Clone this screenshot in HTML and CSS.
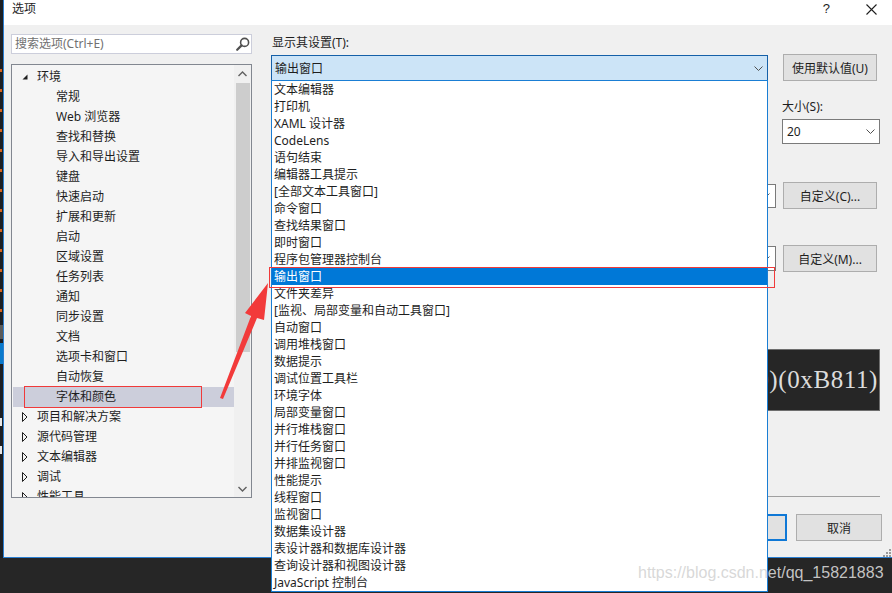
FILE: index.html
```html
<!DOCTYPE html>
<html lang="zh-CN">
<head>
<meta charset="utf-8">
<title>选项</title>
<link rel="stylesheet" href="styles.css">
</head>
<body>
<div class="screen">
  <div class="top">
    <div class="strip"></div>
    <div class="dialog">
      <div class="titlebar">
        <span class="title">选项</span>
        <span class="help">?</span>
        <svg class="close" width="11" height="11" viewBox="0 0 11 11"><path d="M0.5 0.5L10.5 10.5M10.5 0.5L0.5 10.5" stroke="#1e1e1e" stroke-width="1.1" fill="none"/></svg>
      </div>
      <div class="body">
        <div class="left">
          <div class="search">
            <span class="ph">搜索选项(Ctrl+E)</span>
            <svg class="mag" width="14" height="14" viewBox="0 0 14 14"><circle cx="8.6" cy="5.4" r="4" stroke="#505050" stroke-width="1.6" fill="none"/><path d="M5.6 8.4L1.2 12.8" stroke="#505050" stroke-width="2.2" stroke-linecap="round"/></svg>
          </div>
          <div class="tree">
            <div class="rows">
              <div class="row l0"><span class="tw"><svg width="6" height="6" viewBox="0 0 6 6"><polygon points="5.5,0.5 5.5,5.5 0.5,5.5" fill="#1e1e1e"/></svg></span><span>环境</span></div>
              <div class="row l1">常规</div>
              <div class="row l1">Web 浏览器</div>
              <div class="row l1">查找和替换</div>
              <div class="row l1">导入和导出设置</div>
              <div class="row l1">键盘</div>
              <div class="row l1">快速启动</div>
              <div class="row l1">扩展和更新</div>
              <div class="row l1">启动</div>
              <div class="row l1">区域设置</div>
              <div class="row l1">任务列表</div>
              <div class="row l1">通知</div>
              <div class="row l1">同步设置</div>
              <div class="row l1">文档</div>
              <div class="row l1">选项卡和窗口</div>
              <div class="row l1">自动恢复</div>
              <div class="row l1 sel">字体和颜色</div>
              <div class="row l0"><span class="tw"><svg width="6" height="10" viewBox="0 0 6 10"><polygon points="0.5,0.5 5,5 0.5,9.5" fill="none" stroke="#1e1e1e" stroke-width="1"/></svg></span><span>项目和解决方案</span></div>
              <div class="row l0"><span class="tw"><svg width="6" height="10" viewBox="0 0 6 10"><polygon points="0.5,0.5 5,5 0.5,9.5" fill="none" stroke="#1e1e1e" stroke-width="1"/></svg></span><span>源代码管理</span></div>
              <div class="row l0"><span class="tw"><svg width="6" height="10" viewBox="0 0 6 10"><polygon points="0.5,0.5 5,5 0.5,9.5" fill="none" stroke="#1e1e1e" stroke-width="1"/></svg></span><span>文本编辑器</span></div>
              <div class="row l0"><span class="tw"><svg width="6" height="10" viewBox="0 0 6 10"><polygon points="0.5,0.5 5,5 0.5,9.5" fill="none" stroke="#1e1e1e" stroke-width="1"/></svg></span><span>调试</span></div>
              <div class="row l0"><span class="tw"><svg width="6" height="10" viewBox="0 0 6 10"><polygon points="0.5,0.5 5,5 0.5,9.5" fill="none" stroke="#1e1e1e" stroke-width="1"/></svg></span><span>性能工具</span></div>
            </div>
            <div class="vscroll">
              <div class="sbtn"><svg width="9" height="6" viewBox="0 0 9 6"><path d="M0.5 5L4.5 1L8.5 5" stroke="#606060" stroke-width="1.4" fill="none"/></svg></div>
              <div class="thumb"></div>
              <div class="track"></div>
              <div class="sbtn"><svg width="9" height="6" viewBox="0 0 9 6"><path d="M0.5 1L4.5 5L8.5 1" stroke="#606060" stroke-width="1.4" fill="none"/></svg></div>
            </div>
          </div>
        </div>
        <div class="right">
          <div class="rowA">
            <div class="mid">
              <div class="lbl">显示其设置(T):</div>
              <div class="combo open"><span>输出窗口</span><svg class="chev" width="9" height="5" viewBox="0 0 9 5"><path d="M0.5 0.5L4.5 4.5L8.5 0.5" stroke="#505050" stroke-width="1" fill="none"/></svg></div>
            </div>
            <div class="side"><div class="btn">使用默认值(U)</div></div>
          </div>
          <div class="rowB">
            <div class="mid"></div>
            <div class="side">
              <div class="lbl">大小(S):</div>
              <div class="combo size"><span>20</span><svg class="chev" width="9" height="5" viewBox="0 0 9 5"><path d="M0.5 0.5L4.5 4.5L8.5 0.5" stroke="#505050" stroke-width="1" fill="none"/></svg></div>
            </div>
          </div>
          <div class="rowC">
            <div class="mid"><div class="combo hid"><span>自动</span><svg class="chev" width="9" height="5" viewBox="0 0 9 5"><path d="M0.5 0.5L4.5 4.5L8.5 0.5" stroke="#606060" stroke-width="1" fill="none"/></svg></div></div>
            <div class="side"><div class="btn">自定义(C)...</div></div>
          </div>
          <div class="rowD">
            <div class="mid"><div class="combo hid"><span>自动</span><svg class="chev" width="9" height="5" viewBox="0 0 9 5"><path d="M0.5 0.5L4.5 4.5L8.5 0.5" stroke="#606060" stroke-width="1" fill="none"/></svg></div></div>
            <div class="side"><div class="btn">自定义(M)...</div></div>
          </div>
          <div class="preview"><span>AaBbCc0)(0xB811)</span></div>
          <div class="sep"></div>
          <div class="actions">
            <div class="btn ok">确定</div>
            <div class="btn cancel">取消</div>
          </div>
        </div>
      </div>
    </div>
  </div>
  <div class="bottom"></div>

  <div class="droplist">
    <div class="it">文本编辑器</div>
    <div class="it">打印机</div>
    <div class="it">XAML 设计器</div>
    <div class="it">CodeLens</div>
    <div class="it">语句结束</div>
    <div class="it">编辑器工具提示</div>
    <div class="it">[全部文本工具窗口]</div>
    <div class="it">命令窗口</div>
    <div class="it">查找结果窗口</div>
    <div class="it">即时窗口</div>
    <div class="it">程序包管理器控制台</div>
    <div class="it hl">输出窗口</div>
    <div class="it">文件夹差异</div>
    <div class="it">[监视、局部变量和自动工具窗口]</div>
    <div class="it">自动窗口</div>
    <div class="it">调用堆栈窗口</div>
    <div class="it">数据提示</div>
    <div class="it">调试位置工具栏</div>
    <div class="it">环境字体</div>
    <div class="it">局部变量窗口</div>
    <div class="it">并行堆栈窗口</div>
    <div class="it">并行任务窗口</div>
    <div class="it">并排监视窗口</div>
    <div class="it">性能提示</div>
    <div class="it">线程窗口</div>
    <div class="it">监视窗口</div>
    <div class="it">数据集设计器</div>
    <div class="it">表设计器和数据库设计器</div>
    <div class="it">查询设计器和视图设计器</div>
    <div class="it">JavaScript 控制台</div>
  </div>

  <div class="mark mark-tree"></div>
  <div class="mark mark-list"></div>
  <svg class="arrow" width="892" height="593" viewBox="0 0 892 593">
    <polygon points="220,398 251,316 245,313 268,283 264,320 257,318 223,399" fill="#f23a3a"/>
  </svg>
  <svg class="grip" width="8" height="8" viewBox="0 0 8 8">
    <rect x="6" y="0" width="2" height="2" fill="#9a9a9a"/>
    <rect x="3" y="3" width="2" height="2" fill="#9a9a9a"/>
    <rect x="6" y="3" width="2" height="2" fill="#9a9a9a"/>
    <rect x="0" y="6" width="2" height="2" fill="#9a9a9a"/>
    <rect x="3" y="6" width="2" height="2" fill="#9a9a9a"/>
    <rect x="6" y="6" width="2" height="2" fill="#9a9a9a"/>
  </svg>
  <div class="watermark">https://blog.csdn.net/qq_15821883</div>
</div>
</body>
</html>
```

FILE: styles.css
```css
* { box-sizing: border-box; margin: 0; padding: 0; }
html, body { width: 892px; height: 593px; overflow: hidden; }
body {
  background: #252526;
  font-family: "Noto Sans", "Noto Sans CJK SC", sans-serif;
  font-size: 12px;
  color: #1e1e1e;
}
.screen { position: relative; width: 892px; height: 593px; display: flex; flex-direction: column; }
.top { display: flex; height: 558px; }
.strip {
  width: 3px;
  background:
    linear-gradient(#0a7acc, #0a7acc) 0 343px / 3px 21px no-repeat,
    linear-gradient(#5a5a5a, #5a5a5a) 0 325px / 3px 14px no-repeat,
    linear-gradient(#e8e8e8, #e8e8e8) 0 418px / 2px 8px no-repeat,
    linear-gradient(#e8e8e8, #e8e8e8) 0 446px / 2px 8px no-repeat,
    repeating-linear-gradient(to bottom, transparent 0 17px, #d8641e 17px 20px) 0 52px / 2px 262px no-repeat,
    #1c1f24;
}
.dialog {
  flex: 1;
  display: flex;
  flex-direction: column;
  background: #f0f0f0;
  border-left: 1px solid #2b7fd2;
  border-bottom: 1px solid #2b7fd2;
}
.titlebar { height: 25px; background: #fff; display: flex; align-items: flex-start; padding-top: 1px; }
.title { padding-left: 8px; line-height: 16px; font-size: 12px; }
.help { margin-left: auto; line-height: 16px; font-size: 13px; font-family: "Liberation Sans", sans-serif; }
.close { margin-left: 36px; margin-top: 3px; margin-right: 15px; }

.body { flex: 1; display: flex; }
.left { width: 248px; padding-left: 7px; padding-top: 9px; }
.search {
  height: 20px;
  background: #fff;
  border: 1px solid #cccedb;
  display: flex;
  align-items: center;
  padding-left: 3px;
}
.ph { color: #717171; line-height: 18px; }
.mag { margin-left: auto; margin-right: 1px; }
.tree {
  margin-top: 10px;
  height: 434px;
  border: 1px solid #828790;
  background: #f5f5f5;
  display: flex;
}
.rows { flex: 1; padding: 2px 0 0 1px; overflow: hidden; }
.row { height: 20px; line-height: 20px; display: flex; align-items: center; white-space: nowrap; }
.row.l0 { padding-left: 9px; }
.row.l1 { padding-left: 43px; }
.tw { width: 15px; display: flex; align-items: center; }
.row.sel { background: #cccedb; }
.vscroll { width: 17px; background: #f0f0f0; display: flex; flex-direction: column; align-items: center; }
.sbtn { height: 17px; width: 17px; display: flex; align-items: center; justify-content: center; }
.thumb { width: 14px; height: 269px; margin-top: 1px; background: #cdcdcd; }
.track { flex: 1; }

.right { margin-left: 19px; width: 609px; padding-top: 10px; display: flex; flex-direction: column; }
.rowA, .rowB, .rowC, .rowD { display: flex; }
.mid { width: 505px; display: flex; flex-direction: column; }
.side { margin-left: 6px; width: 98px; display: flex; flex-direction: column; }
.lbl { line-height: 16px; padding-left: 1px; }
.rowA { align-items: flex-end; }
.rowA .lbl { margin-bottom: 4px; }
.combo {
  display: flex;
  align-items: center;
  background: #fff;
  border: 1px solid #7a7a7a;
  padding-left: 3px;
  padding-right: 4px;
}
.chev { margin-left: auto; }
.combo.open { width: 497px; height: 26px; background: #cce4f7; border-color: #1560a8; }
.btn {
  height: 27px;
  border: 1px solid #adadad;
  background: #e1e1e1;
  display: flex;
  align-items: center;
  justify-content: center;
}
.side .btn { margin-left: 1px; width: 94px; }
.rowB { margin-top: 18px; }
.rowB .lbl { margin-bottom: 4px; padding-left: 0; }
.combo.size { height: 25px; width: 98px; padding-left: 4px; }
.rowC { margin-top: 38px; align-items: center; }
.rowD { margin-top: 36px; align-items: center; }
.combo.hid { margin-left: auto; width: 220px; height: 25px; padding-right: 5px; }
.rowC .combo.hid { height: 24px; }
.preview {
  margin-top: 77px;
  height: 62px;
  background: #262626;
  border: 1px solid #6e6e6e;
  display: flex;
  align-items: center;
  justify-content: flex-end;
  padding-right: 1px;
  overflow: hidden;
  white-space: nowrap;
}
.preview span { font-family: "Liberation Serif", serif; font-size: 25px; letter-spacing: 0.6px; color: #dcdcdc; line-height: 30px; }
.sep { margin-top: 85px; height: 1px; background: #a0a0a0; }
.actions { margin-top: 17px; display: flex; justify-content: flex-end; gap: 9px; margin-right: -2px; }
.actions .btn { width: 86px; }
.btn.ok { border: 2px solid #0f78d6; }

.bottom { flex: 1; background: #262626; }

.droplist {
  position: absolute;
  left: 271px;
  top: 80px;
  width: 497px;
  height: 512px;
  background: #fff;
  border: 1px solid #1a7ed4;
}
.it { height: 17px; line-height: 17px; padding-left: 2px; white-space: nowrap; }
.it.hl { background: #0078d7; color: #fff; }

.mark { position: absolute; border: 1px solid #f03a3a; }
.mark-tree { left: 24px; top: 386px; width: 178px; height: 22px; }
.mark-list { left: 269px; top: 267px; width: 506px; height: 21px; }
.arrow { position: absolute; left: 0; top: 0; pointer-events: none; }
.grip { position: absolute; left: 883px; top: 549px; }
.watermark {
  position: absolute;
  left: 638px;
  top: 563px;
  font-family: "Liberation Sans", sans-serif;
  font-size: 16px;
  line-height: 20px;
  color: rgba(212, 212, 212, 0.92);
  white-space: nowrap;
}
```
